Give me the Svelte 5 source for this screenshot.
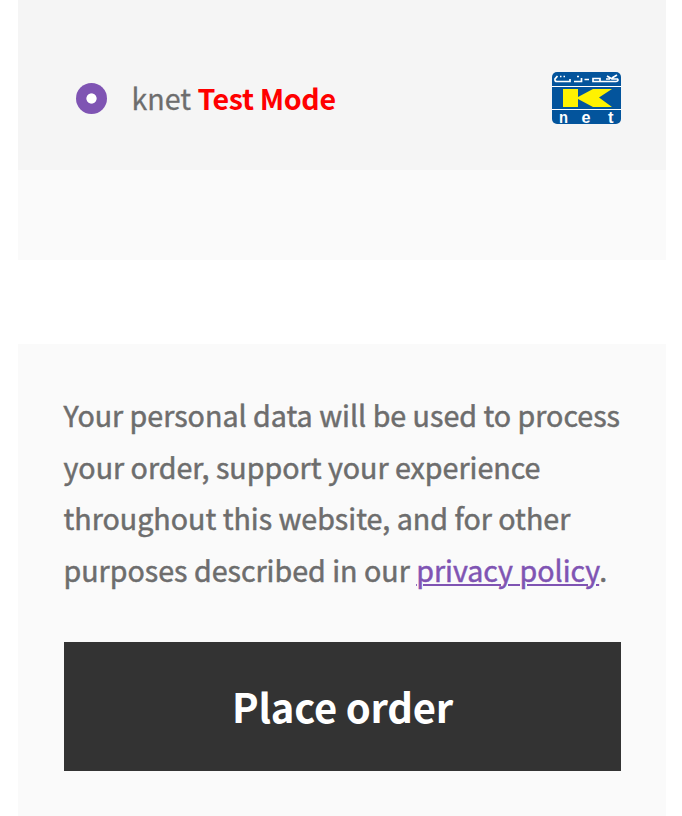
<script>
  let method = $state('knet');
  const lines = [
    'Your personal data will be used to process',
    'your order, support your experience',
    'throughout this website, and for other'
  ];
</script>

<main>
  <section class="payment">
    <label class="method">
      <input type="radio" name="payment" value="knet" bind:group={method} />
      <span class="name">knet <strong>Test Mode</strong></span>
      <svg class="logo" width="69" height="52" viewBox="0 0 69 52" role="img" aria-label="knet">
        <rect width="69" height="52" rx="5" fill="#03549c" />
        <path d="M0 14h69v1H0zM0 37h69v1H0z" fill="#fff" />
        <path d="M11 17h15v8L41 17h19L47 25.500l13 9.500H41L26 27v8H11z" fill="#fff200" />
        <g fill="none" stroke="#fff" stroke-width="1.700">
          <path d="M5.500 4L3 7Q2.500 9.500 5 9.500H18V7M22 9.500H29.500V6M32.500 7.500h4.500M50 9.500H41V6.500H48V9.500M50 9.500H64Q67 9 65.500 7H60L55 4M60 6l5-3M54 7h4" />
          <path d="M8 4.500h1.500M11.500 4.500h1.500M25 4.500h2" stroke-width="1.500" />
        </g>
        <g fill="#fff" font-family="Liberation Sans, sans-serif" font-size="16.500" font-weight="700">
          <text x="7" y="50.500" textLength="9" lengthAdjust="spacingAndGlyphs">n</text>
          <text x="29.500" y="50.500" textLength="9" lengthAdjust="spacingAndGlyphs">e</text>
          <text x="56" y="50.500">t</text>
        </g>
      </svg>
    </label>
    <div class="details"></div>
  </section>

  <section class="order">
    <p>
      {#each lines as line}{line}<br />{/each}purposes described in our <a href="#privacy">privacy policy</a>.
    </p>
    <button type="button">Place order</button>
  </section>
</main>

<style>
  :global(body) {
    background: #fff;
  }
  main {
    box-sizing: border-box;
    height: 816px;
    padding: 0 16px 0 18px;
    overflow: hidden;
    font-family: 'Noto Sans CJK SC', 'Noto Sans', sans-serif;
    font-size: 28.6px;
    color: #6d6d6d;
  }
  .payment {
    height: 260px;
    margin-bottom: 84px;
    background: #fafafa;
  }
  .method {
    display: flex;
    align-items: center;
    box-sizing: border-box;
    height: 170px;
    padding: 26px 45px 0 58px;
    background: #f5f5f5;
  }
  input {
    appearance: none;
    width: 31px;
    height: 31px;
    margin: 0 24.5px 0 0;
    border-radius: 50%;
    background: radial-gradient(circle, #fff 4.7px, #7f54b3 5.5px);
  }
  .name {
    padding-bottom: 2px;
    -webkit-text-stroke: 0.3px currentColor;
  }
  strong {
    font-weight: 700;
    letter-spacing: -0.36px;
    color: #f00;
    -webkit-text-stroke: 0;
  }
  .logo {
    margin-left: auto;
  }
  .order {
    box-sizing: border-box;
    height: 472px;
    padding: 45px 45px 0 45.5px;
    background: #fafafa;
  }
  p {
    margin: 0 0 46.4px;
    font-size: 28.64px;
    line-height: 51.65px;
    white-space: nowrap;
    -webkit-text-stroke: 0.5px currentColor;
  }
  a {
    color: #7f54b3;
    text-decoration: underline;
    text-decoration-thickness: 2px;
    text-underline-offset: 2px;
  }
  button {
    display: block;
    width: 557px;
    height: 129px;
    margin-left: 0.5px;
    padding: 0 0 2px;
    border: 0;
    background: #333;
    color: #fff;
    font: 700 40px 'Noto Sans CJK SC', 'Noto Sans', sans-serif;
    letter-spacing: -0.25px;
  }
</style>
